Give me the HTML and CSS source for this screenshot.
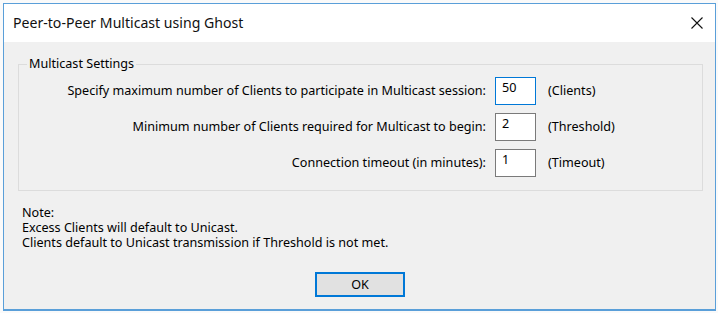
FILE: index.html
```html
<!DOCTYPE html>
<html>
<head>
<meta charset="utf-8">
<link rel="stylesheet" href="styles.css">
</head>
<body>
<div class="dialog">
  <div class="titlebar">
    <span class="title">Peer-to-Peer Multicast using Ghost</span>
    <span class="close">
      <svg width="12" height="12" viewBox="0 0 12 12"><path d="M0.5 0.5 L11.5 11.5 M11.5 0.5 L0.5 11.5" stroke="#111" stroke-width="1.1" fill="none"/></svg>
    </span>
  </div>
  <div class="content">
    <fieldset class="group">
      <legend class="legend">Multicast Settings</legend>
      <div class="rows">
        <span class="label">Specify maximum number of Clients to participate in Multicast session:</span>
        <span class="field focused">50</span>
        <span class="unit">(Clients)</span>
        <span class="label">Minimum number of Clients required for Multicast to begin:</span>
        <span class="field">2</span>
        <span class="unit">(Threshold)</span>
        <span class="label">Connection timeout (in minutes):</span>
        <span class="field">1</span>
        <span class="unit">(Timeout)</span>
      </div>
    </fieldset>
    <div class="note">
      <div>Note:</div>
      <div>Excess Clients will default to Unicast.</div>
      <div>Clients default to Unicast transmission if Threshold is not met.</div>
    </div>
    <div class="actions">
      <button class="ok">OK</button>
    </div>
  </div>
</div>
</body>
</html>
```
FILE: styles.css
```css
html, body {
  margin: 0;
  padding: 0;
}
body {
  background: #fafafa;
  font-family: "Noto Sans", "Open Sans", sans-serif;
  font-size: 12.6px;
  color: #000;
  width: 718px;
  height: 313px;
  overflow: hidden;
}
.dialog {
  margin: 3px 0 0 3px;
  width: 713px;
  height: 308px;
  box-sizing: border-box;
  border: 1px solid #5a9fd9;
  border-bottom-width: 2px;
  display: flex;
  flex-direction: column;
  background: #f0f0f0;
}
.titlebar {
  height: 38px;
  background: #fff;
  display: flex;
  align-items: center;
  justify-content: space-between;
  padding-left: 9px;
  padding-right: 12px;
  flex: none;
}
.title {
  font-size: 14.1px;
  line-height: 18px;
  color: #111;
}
.close {
  display: flex;
  align-items: center;
}
.content {
  flex: 1;
  display: flex;
  flex-direction: column;
  padding: 0 12px 0 14px;
}
.group {
  margin: 14px 0 0 0;
  padding: 5px 0 13px 0;
  border: 1px solid #dcdcdc;
  min-width: 0;
}
.legend {
  margin-left: 8px;
  padding: 0 2px;
  line-height: 16px;
}
.rows {
  display: grid;
  grid-template-columns: 467px 41px auto;
  column-gap: 9px;
  row-gap: 8px;
  align-items: center;
}
.label {
  text-align: right;
  line-height: 16px;
}
.unit {
  margin-left: 3px;
  line-height: 16px;
}
.field {
  box-sizing: border-box;
  height: 28px;
  border: 1px solid #7a7a7a;
  background: #fff;
  padding: 2px 0 0 6px;
  line-height: 16px;
}
.field.focused {
  border-color: #0078d7;
}
.note {
  margin-top: 14px;
  padding-left: 4px;
  line-height: 15px;
}
.actions {
  display: flex;
  justify-content: center;
  margin-top: 22px;
  padding-right: 1px;
}
.ok {
  width: 90px;
  height: 25px;
  box-sizing: border-box;
  border: 2px solid #0078d7;
  background: #e1e1e1;
  font-family: inherit;
  font-size: 12.6px;
  color: #000;
  padding: 0;
}
```
